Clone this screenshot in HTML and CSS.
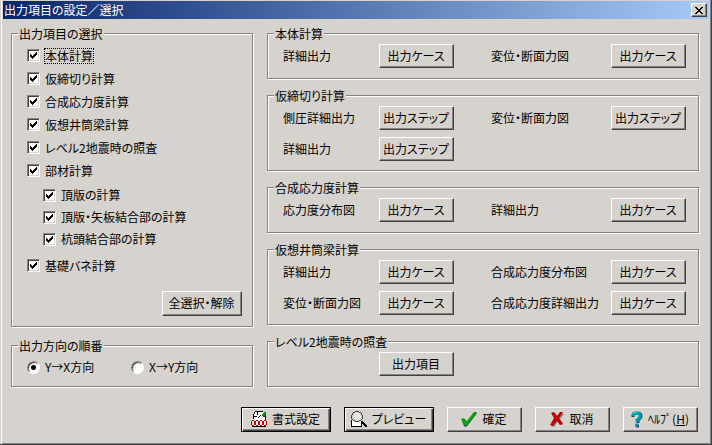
FILE: index.html
```html
<!DOCTYPE html>
<html lang="ja">
<head>
<meta charset="utf-8">
<title>出力項目の設定／選択</title>
<link rel="stylesheet" href="styles.css">
</head>
<body>
<main class="window">
  <header class="titlebar">
    <h1 class="title">出力項目の設定／選択</h1>
    <button class="close" type="button" aria-label="閉じる">
      <svg width="8" height="7" viewBox="0 0 8 7" shape-rendering="crispEdges"><path d="M0 0h2v1h1v1h2v-1h1v-1h2v1h-1v1h-1v1h-1v1h1v1h1v1h1v1h-2v-1h-1v-1h-2v1h-1v1h-2v-1h1v-1h1v-1h1v-1h-1v-1h-1v-1h-1z"/></svg>
    </button>
  </header>

  <div class="content">
    <div class="column column-left">
      <fieldset class="group group-select">
        <legend>出力項目の選択</legend>
        <label class="check"><input type="checkbox" checked><span class="focused">本体計算</span></label>
        <label class="check"><input type="checkbox" checked><span>仮締切り計算</span></label>
        <label class="check"><input type="checkbox" checked><span>合成応力度計算</span></label>
        <label class="check"><input type="checkbox" checked><span>仮想井筒梁計算</span></label>
        <label class="check"><input type="checkbox" checked><span>レベル2地震時の照査</span></label>
        <label class="check"><input type="checkbox" checked><span>部材計算</span></label>
        <div class="children">
          <label class="check"><input type="checkbox" checked><span>頂版の計算</span></label>
          <label class="check"><input type="checkbox" checked><span>頂版・矢板結合部の計算</span></label>
          <label class="check"><input type="checkbox" checked><span>杭頭結合部の計算</span></label>
        </div>
        <label class="check"><input type="checkbox" checked><span>基礎バネ計算</span></label>
        <button class="btn btn-all" type="button">全選択・解除</button>
      </fieldset>
      <fieldset class="group group-order">
        <legend>出力方向の順番</legend>
        <div class="radios">
          <label class="check"><input type="radio" name="order" checked><span>Y→X方向</span></label>
          <label class="check"><input type="radio" name="order"><span>X→Y方向</span></label>
        </div>
      </fieldset>
    </div>

    <div class="column column-right">
      <fieldset class="group group-single">
        <legend>本体計算</legend>
        <div class="rows">
          <label for="b1">詳細出力</label><button class="btn" id="b1" type="button">出力ケース</button>
          <label class="second" for="b2">変位・断面力図</label><button class="btn" id="b2" type="button">出力ケース</button>
        </div>
      </fieldset>
      <fieldset class="group">
        <legend>仮締切り計算</legend>
        <div class="rows">
          <label for="b3">側圧詳細出力</label><button class="btn" id="b3" type="button">出力ステップ</button>
          <label class="second" for="b4">変位・断面力図</label><button class="btn" id="b4" type="button">出力ステップ</button>
          <label for="b5">詳細出力</label><button class="btn" id="b5" type="button">出力ステップ</button>
        </div>
      </fieldset>
      <fieldset class="group group-single">
        <legend>合成応力度計算</legend>
        <div class="rows">
          <label for="b6">応力度分布図</label><button class="btn" id="b6" type="button">出力ケース</button>
          <label class="second" for="b7">詳細出力</label><button class="btn" id="b7" type="button">出力ケース</button>
        </div>
      </fieldset>
      <fieldset class="group">
        <legend>仮想井筒梁計算</legend>
        <div class="rows">
          <label for="b8">詳細出力</label><button class="btn" id="b8" type="button">出力ケース</button>
          <label class="second" for="b9">合成応力度分布図</label><button class="btn" id="b9" type="button">出力ケース</button>
          <label for="b10">変位・断面力図</label><button class="btn" id="b10" type="button">出力ケース</button>
          <label class="second" for="b11">合成応力度詳細出力</label><button class="btn" id="b11" type="button">出力ケース</button>
        </div>
      </fieldset>
      <fieldset class="group group-single">
        <legend>レベル2地震時の照査</legend>
        <div class="rows">
          <button class="btn btn-items" type="button">出力項目</button>
        </div>
      </fieldset>
    </div>
  </div>

  <footer class="actions">
    <button class="btn action action-framed" type="button">
      <svg width="16" height="16" viewBox="0 0 16 16" shape-rendering="crispEdges">
        <path fill="#fff" d="M4 1h8v2h2v12H2V4h1V2h1z"/>
        <path d="M4 0h8v1H4zM3 1h1v2H3zM2 3h1v5H2zM6 1h1v3H6zM3 5h3v1H3zM14 5h1v4h-1zM1 15h14v1H1zM7 6h1v1H7zM8 5h1v1H8zM9 4h1v1H9z"/>
        <path fill="#008200" d="M13 1h2v4h-1v1h-2V5h-1V3h1V2h1z"/>
        <path fill="#00c342" d="M13 2h1v1h-1zM12 3h1v1h-1z"/>
        <path fill="#c00000" d="M1 9h2v1H1zM0 10h1v4H0zM3 10h1v4H3zM1 14h2v1H1zM5 9h2v1H5zM4 10h1v4H4zM7 10h1v4H7zM5 14h2v1H5zM9 9h2v1H9zM8 10h1v4H8zM11 10h1v4h-1zM9 14h2v1H9zM13 9h2v1h-2zM12 10h1v4h-1zM15 10h1v4h-1zM13 14h2v1h-2z"/>
      </svg>
      <span>書式設定</span>
    </button>
    <button class="btn action action-framed" type="button">
      <svg width="16" height="16" viewBox="0 0 16 16" shape-rendering="crispEdges">
        <path fill="#fff" d="M1 6h9v9H1z"/>
        <path d="M0 9h1v7H0zM1 15h10v1H1zM10 12h1v3h-1z"/>
        <path fill="#d6d3ce" d="M3 1h6v1h1v1h1v6h-1v1H9v1H3v-1H2V9H1V3h1V2h1z"/>
        <path fill="#fff" d="M4 2h1v1H4zM6 2h1v1H6zM8 2h1v1H8zM3 3h1v1H3zM5 3h1v1H5zM7 3h1v1H7zM4 4h1v1H4zM6 4h1v1H6zM8 4h1v1H8zM3 5h1v1H3zM5 5h1v1H5zM7 5h1v1H7zM9 5h1v1H9zM4 6h1v1H4zM6 6h1v1H6zM8 6h1v1H8zM3 7h1v1H3zM5 7h1v1H5zM7 7h1v1H7zM4 8h1v1H4zM6 8h1v1H6zM8 8h1v1H8z"/>
        <path fill="#424142" d="M4 0h4v1H4zM2 1h2v1H2zM8 1h2v1H8zM1 2h1v2H1zM10 2h1v2h-1zM0 4h1v4H0zM11 4h1v4h-1zM1 8h1v1H1zM10 8h1v1h-1zM2 9h2v1H2zM8 9h2v1H8zM4 10h4v1H4z"/>
        <path d="M10 10h2v1h1v1h1v1h1v1h1v2h-2v-1h-1v-1h-1v-1h-1v-1h-1z"/>
      </svg>
      <span>プレビュー</span>
    </button>
    <button class="btn action" type="button">
      <svg width="16" height="15" viewBox="0 0 16 15">
        <path fill="#203070" d="M1 8l3-1 2 3 7-9 3 0-9 12-2 2-2-1z"/>
        <path fill="#00a800" d="M0 7l3-1 2 4 8-10 3 0-9 12-2 2-2-1z"/>
      </svg>
      <span>確定</span>
    </button>
    <button class="btn action" type="button">
      <svg width="14" height="15" viewBox="0 0 14 15">
        <path fill="#848284" d="M2 1l3 0 3 4 3-4 3 1-4 5 3 5-2 1-3-4-4 6-3-1 5-7z"/>
        <path fill="#c00000" d="M1 1l3-1 3 4 3-4 3 0-4 6 4 6-3 1-3-4-4 5-3-1 4-7z"/>
      </svg>
      <span>取消</span>
    </button>
    <button class="btn action" type="button">
      <svg width="12" height="17" viewBox="0 0 12 17">
        <path fill="none" stroke="#204070" stroke-width="3" d="M2 6V5q0-3 4-3 4 0 4 3 0 2-3 4v3M5 15h3"/>
        <path fill="none" stroke="#00a0a8" stroke-width="3" d="M2 5q0-3 3-3 4 0 4 3 0 2-3 4v2M4 14h3"/>
        <path fill="none" stroke="#40e0e0" d="M2 3l2-2h3"/>
      </svg>
      <span>ﾍﾙﾌﾟ(<u>H</u>)</span>
    </button>
  </footer>
</main>
</body>
</html>
```
FILE: styles.css
```css
* {
  box-sizing: border-box;
}

body {
  margin: 0;
  background: #d6d3ce;
  color: #000;
  font: 12px/14px "Noto Sans CJK JP", sans-serif;
  font-feature-settings: "palt";
}

button,
input {
  font: inherit;
  font-feature-settings: inherit;
  color: inherit;
}

.window {
  min-height: 100vh;
  padding: 1px 1px 0 2px;
  border-right: 1px solid #424142;
  border-bottom: 1px solid #424142;
  box-shadow: inset 1px 0 #d6d3ce, inset 2px 0 #fff, inset -1px -1px #848284;
}

.titlebar {
  display: flex;
  align-items: center;
  justify-content: space-between;
  height: 18px;
  margin: 0 1px;
  padding: 0 2px 0 1px;
  background: linear-gradient(90deg, #08246b, #a5cbf7);
}

.title {
  margin: 0;
  color: #fff;
  font-size: 12px;
  font-weight: 400;
}

.close {
  display: flex;
  align-items: center;
  justify-content: center;
  width: 16px;
  height: 14px;
  padding: 0;
  background: #d6d3ce;
  border: 1px solid;
  border-color: #fff #424142 #424142 #fff;
  box-shadow: inset -1px -1px #848284;
}

.content {
  display: grid;
  grid-template-columns: 242px 1fr;
  gap: 14px;
  padding: 8px 11px 0 9px;
}

.column {
  display: flex;
  flex-direction: column;
}

.column-left {
  gap: 12px;
}

.column-right {
  gap: 10px;
}

.group {
  min-width: 0;
  margin: 0;
  padding: 4px 12px 9px 15px;
  border: 1px solid #848284;
  box-shadow: 1px 1px #fff, inset 1px 1px #fff;
}

.group-single {
  padding-bottom: 10px;
}

.group-select {
  display: flex;
  flex: 1;
  flex-direction: column;
  padding: 4px 10px 10px 15px;
}

legend {
  margin-left: -9px;
  padding: 0 1px;
  background: #d6d3ce;
  line-height: 13px;
}

.check {
  display: flex;
  align-items: center;
  gap: 5px;
  height: 23px;
}

.children {
  margin: 2px 0 4px 16px;
}

.children .check {
  height: 22px;
}

.focused {
  outline: 1px dotted #000;
}

input {
  flex: none;
  width: 13px;
  height: 13px;
  margin: 0;
  appearance: none;
}

input[type="checkbox"] {
  background: #fff url("data:image/svg+xml,%3Csvg xmlns='http://www.w3.org/2000/svg' width='7' height='7' shape-rendering='crispEdges'%3E%3Cpath d='M0 2h1v1h1v1h1v-1h1v-1h1v-1h1v-1h1v3h-1v1h-1v1h-1v1h-1v1h-1v-1h-1v-1h-1z'/%3E%3C/svg%3E") center no-repeat;
  border: 1px solid;
  border-color: #848284 #fff #fff #848284;
  box-shadow: inset 1px 1px #424142, inset -1px -1px #d6d3ce;
}

input[type="radio"] {
  background: #fff;
  border: 1px solid;
  border-color: #848284 #fff #fff #848284;
  border-radius: 50%;
  box-shadow: inset 1px 1px #424142;
}

input[type="radio"]:checked {
  background: radial-gradient(circle, #000 2px, #fff 3px);
}

.group-order {
  padding-top: 5px;
}

.radios {
  display: grid;
  grid-template-columns: 104px 1fr;
}

.radios .check {
  height: 20px;
}

.rows {
  display: grid;
  grid-template-columns: 96px 75px 1fr 75px;
  row-gap: 7px;
  align-items: center;
}

.second {
  padding-left: 37px;
}

.btn {
  height: 24px;
  padding: 0 1px 1px 0;
  background: #d6d3ce;
  border: 1px solid;
  border-color: #fff #424142 #424142 #fff;
  box-shadow: inset -1px -1px #848284;
  white-space: nowrap;
}

.btn-all {
  align-self: flex-end;
  width: 80px;
  height: 25px;
  margin-top: auto;
}

.btn-items {
  grid-column: 2;
}

.actions {
  display: flex;
  justify-content: flex-end;
  gap: 13px;
  padding: 20px 12px 11px;
}

.action {
  display: flex;
  align-items: center;
  justify-content: center;
  gap: 5px;
  width: 75px;
  height: 25px;
}

.action-framed {
  width: 90px;
  border-color: #000;
  box-shadow: inset 1px 1px #fff, inset -1px -1px #424142, inset -2px -2px #848284;
}
```
